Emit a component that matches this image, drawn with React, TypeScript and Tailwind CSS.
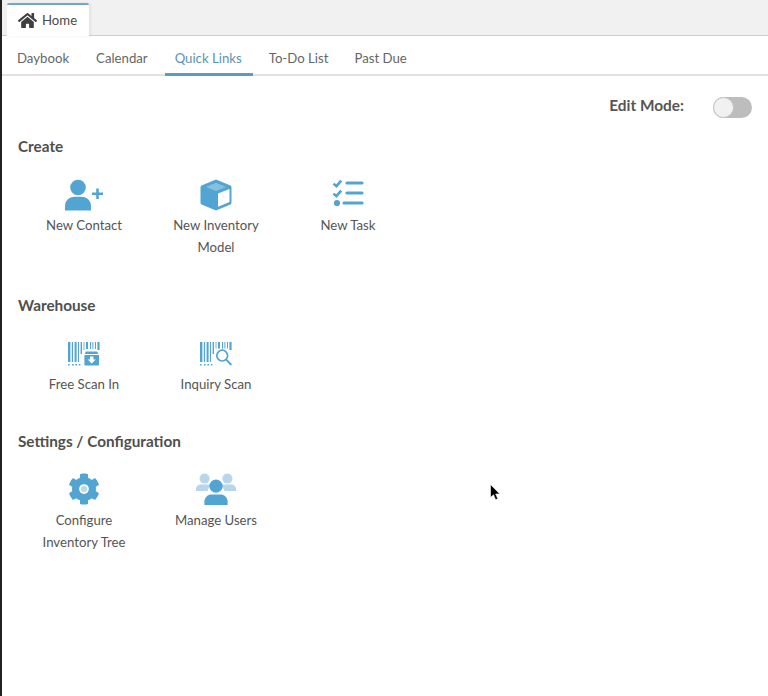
import React from "react";
import { FaHome } from "react-icons/fa";

const Blue = "#52a5d3";

function ContactIcon() {
  return (
    <svg width="40" height="32" viewBox="0 0 40 32">
      <circle cx="14" cy="8.5" r="7.8" fill={Blue} />
      <path fill={Blue} d="M1 31.5 V27 C1 21 6 17.8 11 17.8 H17 C22 17.8 27 21 27 27 V31.5 Z" />
      <path stroke={Blue} strokeWidth="2.6" d="M33.5 9.5 V20 M28 14.7 H39" />
    </svg>
  );
}

function BoxIcon() {
  return (
    <svg width="32" height="32" viewBox="0 0 32 32">
      <path fill={Blue} d="M16 0.5 L30.5 6.5 Q31.5 7 31.5 8.5 V23.5 Q31.5 25 30.5 25.5 L16 31.5 L1.5 25.5 Q0.5 25 0.5 23.5 V8.5 Q0.5 7 1.5 6.5 Z" />
      <path fill="#fff" d="M16 3.8 L26 7.9 L16 12 L6 7.9 Z" opacity="0.3" />
      <path fill="#fff" d="M18 14.6 L29.5 10 V23 L18 27.8 Z" />
    </svg>
  );
}

function TaskIcon() {
  return (
    <svg width="32" height="33" viewBox="0 0 32 33">
      <path fill="none" stroke={Blue} strokeWidth="2.6" d="M1.5 5.6 L4.4 8.2 L9.2 2.6 M1.5 15.6 L4.4 18.2 L9.2 12.6" />
      <circle cx="5" cy="25" r="3.1" fill={Blue} />
      <path stroke={Blue} strokeWidth="3.2" strokeLinecap="round" d="M15 5 H30 M15 15 H30 M12 25 H30" />
    </svg>
  );
}

function Barcode() {
  return (
    <>
      <path fill={Blue} d="M0 0 H2.4 V20 H0 Z M3.8 0 H5 V20 H3.8 Z M6.6 0 H8.6 V20 H6.6 Z M10 0 H11 V20 H10 Z M12.6 0 H14 V12 H12.6 Z M15.6 0 H16.4 V8 H15.6 Z M18 0 H20 V7 H18 Z M22 0 H23 V7 H22 Z M24.4 0 H25.4 V7 H24.4 Z M27 0 H28 V7 H27 Z M29.4 0 H31.6 V8 H29.4 Z" />
      <path fill={Blue} d="M0 22 H1.6 V23.6 H0 Z M4 22 H5.6 V23.6 H4 Z M7.4 22 H9 V23.6 H7.4 Z M10.8 22 H12.4 V23.6 H10.8 Z" />
    </>
  );
}

function ScanInIcon() {
  return (
    <svg width="32" height="24" viewBox="0 0 32 24">
      <Barcode />
      <rect x="14.6" y="8" width="17" height="16" rx="1.5" fill="#fff" />
      <path fill={Blue} d="M18 9.4 H29 L30.4 12 H16.6 Z M16.4 13 H31 V22.4 Q31 23.6 29.6 23.6 H17.8 Q16.4 23.6 16.4 22.4 Z" />
      <path fill="#fff" d="M22 14.4 H25.4 V17.4 H27.8 L23.7 21.4 L19.6 17.4 H22 Z" />
    </svg>
  );
}

function InquiryIcon() {
  return (
    <svg width="32" height="24" viewBox="0 0 32 24">
      <Barcode />
      <rect x="14" y="6.5" width="15" height="14" fill="#fff" />
      <circle cx="22.2" cy="13.6" r="5.4" fill="#fff" stroke={Blue} strokeWidth="1.7" />
      <path stroke={Blue} strokeWidth="2" strokeLinecap="round" d="M26.2 17.6 L30.8 22.4" />
    </svg>
  );
}

function GearIcon() {
  return (
    <svg width="32" height="32" viewBox="0 0 512 512">
      <path fill={Blue} d="M487.4 315.7l-42.6-24.6c4.3-23.2 4.3-47 0-70.2l42.6-24.6c4.9-2.8 7.1-8.6 5.5-14-11.1-35.6-30-67.8-54.7-94.6-3.8-4.1-10-5.1-14.8-2.3L380.8 110c-17.9-15.4-38.5-27.3-60.8-35.1V25.8c0-5.6-3.9-10.5-9.4-11.7-36.7-8.2-74.3-7.8-109.2 0-5.5 1.2-9.4 6.1-9.4 11.7V75c-22.2 7.9-42.8 19.8-60.8 35.1L88.7 85.5c-4.9-2.8-11-1.9-14.8 2.3-24.7 26.7-43.6 58.9-54.7 94.6-1.7 5.4.6 11.2 5.5 14L67.3 221c-4.3 23.2-4.3 47 0 70.2l-42.6 24.6c-4.9 2.8-7.1 8.6-5.5 14 11.1 35.6 30 67.8 54.7 94.6 3.8 4.1 10 5.1 14.8 2.3l42.6-24.6c17.9 15.4 38.5 27.3 60.8 35.1v49.2c0 5.6 3.9 10.5 9.4 11.7 36.7 8.2 74.3 7.8 109.2 0 5.5-1.2 9.4-6.1 9.4-11.7v-49.2c22.2-7.9 42.8-19.8 60.8-35.1l42.6 24.6c4.9 2.8 11 1.9 14.8-2.3 24.7-26.7 43.6-58.9 54.7-94.6 1.5-5.5-.7-11.3-5.6-14.1z" />
      <circle cx="256" cy="256" r="78" fill="#fff" />
      <circle cx="256" cy="256" r="50" fill="#b9d9ec" />
    </svg>
  );
}

function UsersIcon() {
  return (
    <svg width="40" height="32" viewBox="0 0 40 32">
      <g fill="#b8d6e9">
        <circle cx="8.6" cy="5.6" r="5" />
        <circle cx="31.4" cy="5.6" r="5" />
        <path d="M0 18 V16 C0 13 2.5 11.4 5 11.4 H12 C14 11.4 15 12.4 15.2 13 C13 14 12 16 12 18 Z" />
        <path d="M40 18 V16 C40 13 37.5 11.4 35 11.4 H28 C26 11.4 25 12.4 24.8 13 C27 14 28 16 28 18 Z" />
      </g>
      <circle cx="20" cy="13.2" r="6.6" fill={Blue} />
      <path fill={Blue} d="M8.4 32 V28.6 C8.4 24 12 21.4 15.5 21.4 H24.5 C28 21.4 31.6 24 31.6 28.6 V32 Z" />
    </svg>
  );
}

function Item({ icon, label, h, gap }: { icon: React.ReactNode; label: React.ReactNode; h: string; gap: string }) {
  return (
    <div className="flex w-[132px] flex-col items-center text-center">
      <div className={`flex items-end justify-center ${h}`}>{icon}</div>
      <div className={`w-[110px] text-[13.2px] leading-[22px] text-[#555555] ${gap}`}>{label}</div>
    </div>
  );
}

export default function App() {
  return (
    <div className="h-[696px] w-[768px] overflow-hidden border-l-2 border-[#222222] bg-white font-['Lato','Carlito','Liberation_Sans',sans-serif]">
      <div className="flex h-[36px] items-end border-b border-[#cfcfcf] bg-[#f1f1f1] pl-[5px]">
        <div className="mb-[-1px] flex h-[33px] w-[82px] items-center gap-[5px] rounded-t-[2px] border-t-2 border-[#6fa9c9] bg-white pl-[11px] text-[13.2px] text-[#4a4a4a] shadow-[2px_0_3px_rgba(0,0,0,0.06)]">
          <FaHome className="h-[19px] w-[19px] shrink-0 text-[#3f3f3f]" />
          <span>Home</span>
        </div>
      </div>

      <div className="flex h-[40px] items-stretch border-b-2 border-[#e2e2e2] pl-[2px] text-[13.2px] text-[#666666]">
        <div className="flex items-center px-[13px] pt-[8px]">Daybook</div>
        <div className="flex items-center px-[14px] pt-[8px]">Calendar</div>
        <div className="mb-[-2px] ml-[3px] flex items-center border-b-[3px] border-[#5b9dc2] pt-[8px] pr-[11px] pl-[10px] text-[#5b93b5]">Quick Links</div>
        <div className="flex items-center pt-[8px] pr-[13px] pl-[16px]">To-Do List</div>
        <div className="flex items-center pt-[8px] pr-[14px] pl-[13px]">Past Due</div>
      </div>

      <div className="flex items-center justify-end pt-[18px] pr-[16px]">
        <span className="pb-[4px] text-[15.4px] leading-[22px] font-bold text-[#555555]">Edit Mode:</span>
        <div className="ml-[29px] flex h-[21px] w-[39px] items-center rounded-full bg-[#bdbdbd]">
          <div className="h-[21px] w-[21px] rounded-full border border-[#c4c4c4] bg-[#f1f1f1]" />
        </div>
      </div>

      <div className="pl-[16px]">
        <h2 className="mt-[15px] text-[15.3px] leading-[22px] font-bold text-[#4f4f4f]">Create</h2>
        <div className="mt-[21px] flex">
          <Item h="h-[33px]" gap="mt-[3px]" icon={<ContactIcon />} label="New Contact" />
          <Item h="h-[33px]" gap="mt-[3px]" icon={<BoxIcon />} label="New Inventory Model" />
          <Item h="h-[33px]" gap="mt-[3px]" icon={<TaskIcon />} label="New Task" />
        </div>

        <h2 className="mt-[36px] text-[15.3px] leading-[22px] font-bold text-[#4f4f4f]">Warehouse</h2>
        <div className="mt-[26px] flex">
          <Item h="h-[24px]" gap="mt-[7px]" icon={<ScanInIcon />} label="Free Scan In" />
          <Item h="h-[24px]" gap="mt-[7px]" icon={<InquiryIcon />} label="Inquiry Scan" />
        </div>

        <h2 className="mt-[35px] text-[15.3px] leading-[22px] font-bold text-[#4f4f4f]">Settings / Configuration</h2>
        <div className="mt-[20px] flex">
          <Item h="h-[33px]" gap="mt-[4px]" icon={<GearIcon />} label="Configure Inventory Tree" />
          <Item h="h-[33px]" gap="mt-[4px]" icon={<UsersIcon />} label="Manage Users" />
        </div>
      </div>

      <div className="absolute top-[484px] left-[490px]">
        <svg width="11" height="17" viewBox="0 0 11 17">
          <path fill="#000" stroke="#fff" strokeWidth="0.6" d="M0.5 0.5 V13.5 L3.5 10.8 L5.6 15.8 L7.8 14.8 L5.7 10 H9.8 Z" />
        </svg>
      </div>
    </div>
  );
}
